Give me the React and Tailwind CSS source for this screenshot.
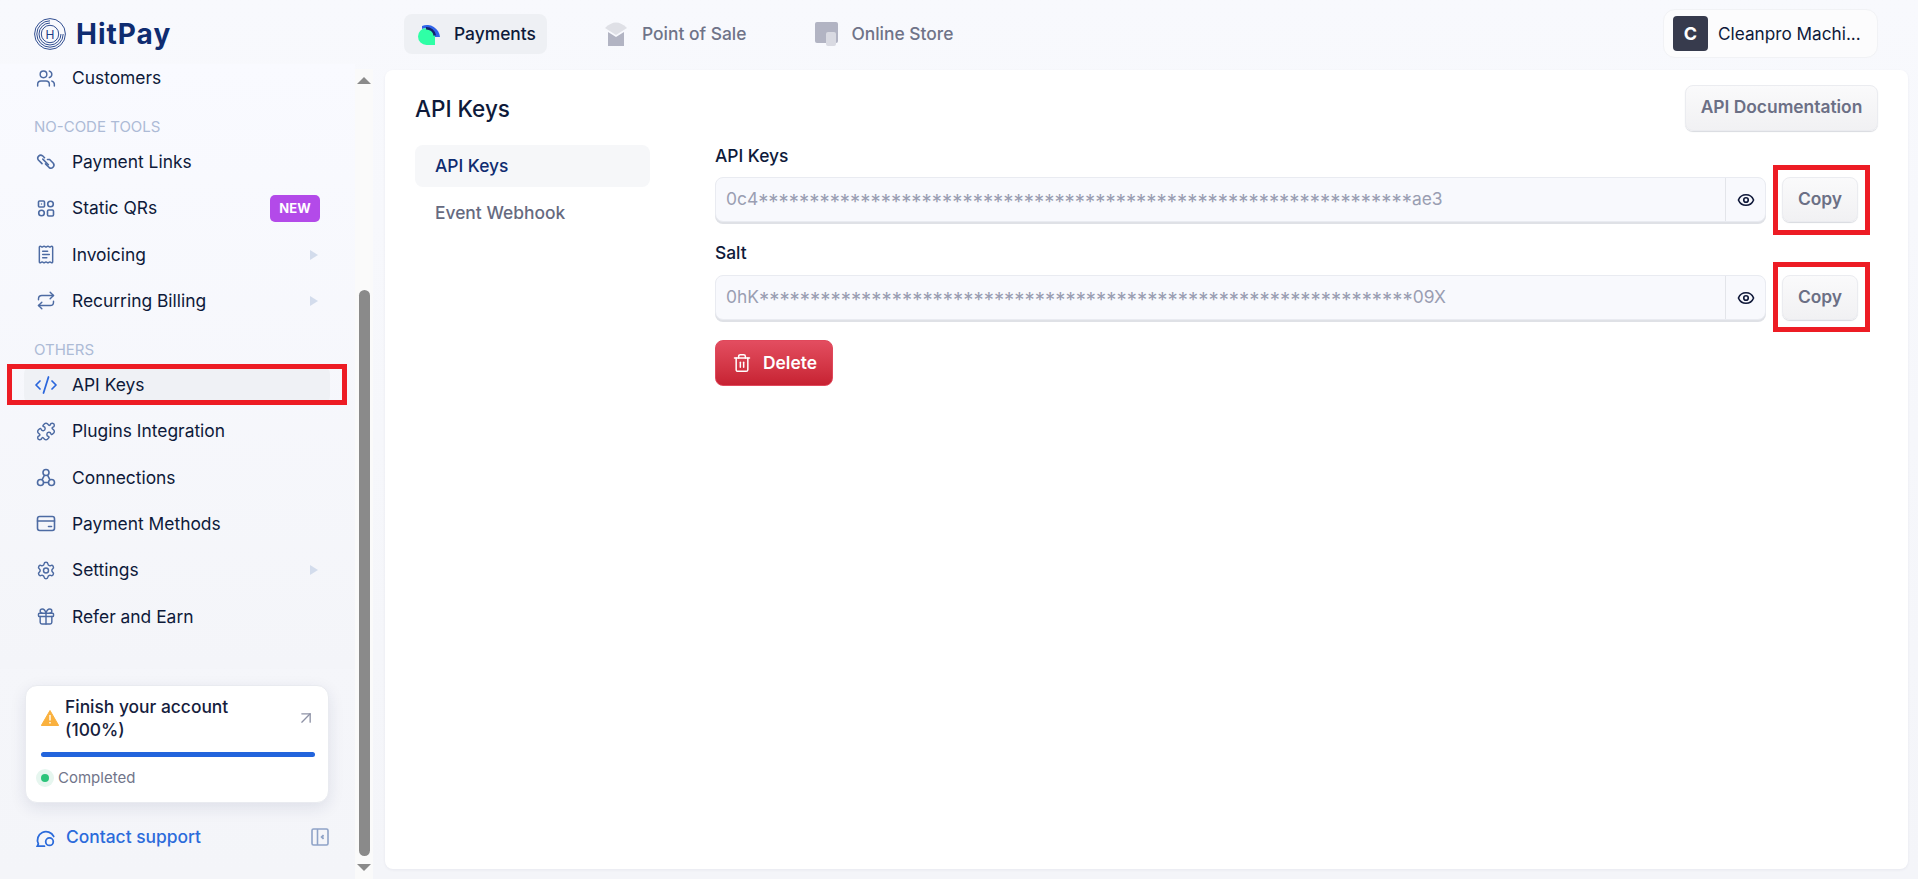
import React from "react";
import { Settings, Gift, Puzzle, CodeXml, ReceiptText, Repeat, Eye, Trash2, ArrowUpRight, Users } from "lucide-react";

const ic = "w-[21px] h-[21px] text-[#4d6ba3]";
const sw = 1.75;

function LinkIcon() {
  return (
    <svg viewBox="0 0 20 20" fill="none" stroke="currentColor" strokeWidth="1.6" strokeLinecap="round" className={ic}>
      <path d="M8.5 6.2 6.6 4.3a3 3 0 0 0-4.2 4.2l3.6 3.6" />
      <path d="M6.8 7.6l5.6 5.6" />
      <path d="M11.5 8l2.1 0 3.7 3.8a3 3 0 0 1-4.2 4.2l-3.6-3.6" />
    </svg>
  );
}
function QrIcon() {
  return (
    <svg viewBox="0 0 20 20" fill="none" stroke="currentColor" strokeWidth="1.6" className={ic}>
      <rect x="2.5" y="2.5" width="6" height="6" rx="1" />
      <rect x="4.9" y="4.9" width="1.2" height="1.2" fill="currentColor" stroke="none" />
      <circle cx="14.5" cy="5.5" r="2.8" />
      <circle cx="5.5" cy="14.5" r="2.8" />
      <rect x="11.5" y="11.5" width="6" height="6" rx="1.2" />
    </svg>
  );
}
function ConnIcon() {
  return (
    <svg viewBox="0 0 20 20" fill="none" stroke="currentColor" strokeWidth="1.6" className={ic}>
      <circle cx="10" cy="5" r="3" />
      <circle cx="4.5" cy="15" r="3" />
      <circle cx="15.5" cy="15" r="3" />
      <path d="M8.5 7.6 6 12.4M11.5 7.6 14 12.4M7.5 15h5" />
    </svg>
  );
}
function CardIcon() {
  return (
    <svg viewBox="0 0 20 20" fill="none" stroke="currentColor" strokeWidth="1.6" strokeLinecap="round" className={ic}>
      <rect x="1.5" y="3" width="17" height="14" rx="2.2" />
      <path d="M1.5 7.5h17M12.5 13h3" />
    </svg>
  );
}

function Tri() {
  return <span className="w-0 h-0 border-y-[5px] border-y-transparent border-l-[8px] border-l-[#d3dcec] mr-[2px]" />;
}

function Row({ icon, label, children, active }) {
  return (
    <div className={`h-[38px] mb-[8.33px] mx-[24px] w-[306px] rounded-lg flex items-center pl-[12px] pr-[10px] ${active ? "bg-[#eff1f5]" : ""}`}>
      <span className="w-[20px] h-[20px] flex items-center justify-center shrink-0">{icon}</span>
      <span className="ml-[16px] text-[17.4px] leading-6 text-[#0e1a3a] flex-1">{label}</span>
      {children}
    </div>
  );
}

function GroupHead({ children }) {
  return <div className="h-[37.67px] pt-[14px] pl-[34px] text-[15px] leading-4 text-[#adbbd6] uppercase">{children}</div>;
}

function Redbox({ className }) {
  return <div className={`absolute border-[5px] border-[#ed1c24] pointer-events-none ${className}`} />;
}

function KeyField({ label, head, tail, boxClass, labelClass }) {
  return (
    <div className="mb-[17px]">
      <div className={`text-[17.4px] leading-6 font-medium text-[#0e1a3a] h-[36px] ${labelClass}`}>{label}</div>
      <div className="flex items-stretch">
        <div className="w-[1051px] h-[45px] flex rounded-lg border border-[#e9ebf1] bg-[#f8f9fd] shadow-[0_2px_0_#dfe1e6]">
          <div className="flex-1 min-w-0 flex items-center pl-[10px] text-[17.4px] text-[#9a9eb2] whitespace-nowrap overflow-hidden">
            <span>{head}</span>
            <span className="text-[20.4px] translate-y-[3px]">{"*".repeat(64)}</span>
            <span>{tail}</span>
          </div>
          <div className="w-[40px] border-l border-[#e3e5ea] flex items-center justify-center">
            <Eye className="w-[18px] h-[18px] text-[#10193a]" strokeWidth={2.2} />
          </div>
        </div>
        <div className="relative ml-[16px]">
          <button className="w-[76px] h-[45px] rounded-lg border border-[#ebecf0] bg-gradient-to-b from-[#fafafb] to-[#f1f1f3] shadow-[0_1px_1px_#d8dadf] text-[17.4px] font-semibold text-[#6b6f85]">Copy</button>
          <Redbox className={`-left-[9px] w-[97px] h-[70px] ${boxClass}`} />
        </div>
      </div>
    </div>
  );
}

function Logo() {
  return (
    <svg viewBox="0 0 32 32" className="w-[32px] h-[32px] text-[#1b3b85]" fill="none" stroke="currentColor">
      <circle cx="16" cy="16" r="15.4" strokeWidth="0.9" />
      <path d="M16 2.8A13.2 13.2 0 1 0 29.2 16" strokeWidth="0.9" />
      <path d="M16 5A11 11 0 1 0 27 16" strokeWidth="0.9" />
      <circle cx="16" cy="16" r="8.7" strokeWidth="0.9" />
      <text x="16" y="20.5" textAnchor="middle" fontSize="12" fontFamily="Inter, sans-serif" fill="currentColor" stroke="none">H</text>
    </svg>
  );
}

function PayIcon() {
  return (
    <svg viewBox="0 0 22 21" className="w-[22px] h-[21px]">
      <path d="M8.5 4A8.5 8.5 0 0 0 8.5 21H17V12.5A8.5 8.5 0 0 0 8.5 4Z" fill="#2fffa6" />
      <path d="M4 2A13 13 0 0 1 22 13H17A8.5 8.5 0 0 0 8.5 4Q6 3.8 4 5Z" fill="#2f62e8" />
      <path d="M8 4.2A8.5 8.5 0 0 1 16.8 11.5" fill="none" stroke="#12246b" strokeWidth="2.5" />
    </svg>
  );
}
function PosIcon() {
  return (
    <svg viewBox="0 0 22 24" className="w-[22px] h-[24px]">
      <path d="M0 6Q11-5 22 6L11 13Z" fill="#dfe0e6" />
      <path d="M3 10l8 5 8-5v14H3Z" fill="#b2b4c3" />
    </svg>
  );
}
function StoreIcon() {
  return (
    <svg viewBox="0 0 23 24" className="w-[23px] h-[24px]">
      <rect width="23" height="21" rx="2" fill="#b2b4c3" />
      <rect x="11" y="10" width="10" height="14" rx="2" fill="#d9dae2" />
    </svg>
  );
}

function Tab({ icon, label, active, className }) {
  return (
    <div className={`h-[40px] rounded-lg flex items-center ${active ? "bg-[#eef0f4] text-[#0e1a3a]" : "text-[#6f7388]"} font-medium text-[17.4px] ${className}`}>
      {icon}
      <span>{label}</span>
    </div>
  );
}

export default function App() {
  return (
    <div className="w-[1918px] h-[879px] overflow-hidden flex bg-gradient-to-b from-[#f8f9fd] to-[#f4f5f9] font-[Inter,sans-serif]">
      <aside className="w-[355px] shrink-0 h-full flex flex-col">
        <div className="h-[64px] shrink-0 pl-[34px] pt-[18px] flex items-start">
          <Logo />
          <span className="ml-[10px] text-[28px] leading-[32px] font-bold tracking-[1px] text-[#0f2c70]">HitPay</span>
        </div>
        <div className="relative h-[605px] shrink-0 overflow-hidden bg-gradient-to-b from-[#f9faff] to-[#f4f5f9]">
          <div className="-mt-[5px]">
            <Row icon={<Users className={ic} strokeWidth={sw} />} label="Customers" />
            <GroupHead>No-code tools</GroupHead>
            <Row icon={<LinkIcon />} label="Payment Links" />
            <Row icon={<QrIcon />} label="Static QRs">
              <span className="w-[50px] h-[27px] rounded-[5px] bg-[#b34ae9] text-white text-[13px] font-bold flex items-center justify-center">NEW</span>
            </Row>
            <Row icon={<ReceiptText className={ic} strokeWidth={sw} />} label="Invoicing"><Tri /></Row>
            <Row icon={<Repeat className={ic} strokeWidth={sw} />} label="Recurring Billing"><Tri /></Row>
            <GroupHead>Others</GroupHead>
            <Row active icon={<CodeXml className="w-[24px] h-[24px] shrink-0 text-[#2a66dc]" strokeWidth={sw} />} label="API Keys" />
            <Row icon={<Puzzle className={ic} strokeWidth={sw} />} label="Plugins Integration" />
            <Row icon={<ConnIcon />} label="Connections" />
            <Row icon={<CardIcon />} label="Payment Methods" />
            <Row icon={<Settings className={ic} strokeWidth={sw} />} label="Settings"><Tri /></Row>
            <Row icon={<Gift className={ic} strokeWidth={sw} />} label="Refer and Earn" />
          </div>
          <Redbox className="left-[7px] top-[300px] w-[340px] h-[41px]" />
        </div>
        <div className="flex-1 px-[25px] pt-[16px]">
          <div className="w-[304px] h-[118px] rounded-xl bg-white shadow-[0_5px_16px_rgba(30,40,90,0.10)] border border-[#e9ebf0] pt-[9px] pl-[15px] pr-[12px]">
            <div className="flex items-center">
              <svg viewBox="0 0 18 16" className="w-[18px] h-[16px] shrink-0">
                <path d="M9 0.5 17.7 15.5H0.3Z" fill="#fab13e" stroke="#fab13e" strokeLinejoin="round" />
                <path d="M9 5v5.5M9 12v1.5" stroke="#fff" strokeWidth="1.4" />
              </svg>
              <span className="ml-[6px] w-[200px] text-[17.4px] leading-[23px] font-medium text-[#161d3d]">Finish your account (100%)</span>
              <ArrowUpRight className="w-[20px] h-[20px] ml-auto text-[#8e92a6]" strokeWidth={1.6} />
            </div>
            <div className="h-[5px] w-[274px] rounded-full bg-[#2264dc] mt-[11px]" />
            <div className="flex items-center mt-[11px] -ml-[5px]">
              <span className="w-[18px] h-[18px] rounded-full bg-[#e6f6ef] flex items-center justify-center">
                <span className="w-[8px] h-[8px] rounded-full bg-[#2cc47b]" />
              </span>
              <span className="ml-[4px] text-[15px] leading-5 text-[#71758a]">Completed</span>
            </div>
          </div>
          <div className="mt-[24px] flex items-center h-[20px] pl-[10px] pr-[1px]">
            <svg viewBox="0 0 20 20" fill="none" stroke="#2b6bdb" strokeWidth="1.7" className="w-[21px] h-[21px]">
              <path d="M9 18.3H2.2l1-2.2A8 8 0 1 1 17.8 9" strokeLinecap="round" />
              <circle cx="13.8" cy="14" r="3.6" />
            </svg>
            <span className="ml-[10px] text-[17.4px] font-medium text-[#2b6bdb]">Contact support</span>
            <svg viewBox="0 0 18 18" fill="none" stroke="#8fa3c7" strokeWidth="1.6" className="w-[18px] h-[18px] ml-auto">
              <rect x="1" y="1" width="16" height="16" rx="1.5" />
              <path d="M6.5 1v16" />
              <path d="M12.5 7 10.5 9l2 2" fill="#8fa3c7" />
            </svg>
          </div>
        </div>
      </aside>

      <div className="w-[18px] shrink-0 h-full pt-[69px]">
        <div className="h-[810px] bg-[#fafafa] flex flex-col items-center">
          <span className="mt-[8px] w-0 h-0 border-x-[7px] border-x-transparent border-b-[7px] border-b-[#8a8a8a]" />
          <div className="mt-[206px] w-[11px] h-[566px] rounded-full bg-[#8a8a8a]" />
          <span className="mt-[8px] w-0 h-0 border-x-[7px] border-x-transparent border-t-[7px] border-t-[#8a8a8a]" />
        </div>
      </div>

      <div className="flex-1 min-w-0 flex flex-col pl-[12px] pr-[10px]">
        <header className="h-[70px] shrink-0 flex items-start relative">
          <Tab active label="Payments" icon={<span className="mr-[14px] flex"><PayIcon /></span>} className="w-[143px] pl-[14px] mt-[14px] ml-[19px]" />
          <Tab label="Point of Sale" icon={<span className="mr-[15px]"><PosIcon /></span>} className="ml-[58px] mt-[14px]" />
          <Tab label="Online Store" icon={<span className="mr-[13px]"><StoreIcon /></span>} className="ml-[69px] mt-[14px]" />
          <div className="ml-auto mt-[9px] mr-[30px] w-[215px] h-[49px] rounded-xl bg-[#fcfcfd] border border-[#f1f2f5] flex items-center pl-[9px]">
            <span className="w-[35px] h-[35px] rounded bg-[#373b4d] text-white font-bold text-[18px] flex items-center justify-center">C</span>
            <span className="ml-[10px] text-[17.2px] text-[#0e1a3a]">Cleanpro Machi...</span>
          </div>
        </header>
        <main className="h-[799px] shrink-0 bg-white rounded-lg shadow-[0_1px_3px_rgba(30,40,90,0.06)] pl-[30px] pr-[30px] pt-[15px]">
          <div className="flex justify-between items-start h-[60px]">
            <h1 className="text-[22.5px] leading-[47px] font-medium text-[#0e1a3a]">API Keys</h1>
            <button className="w-[193px] h-[46px] pb-[1px] rounded-lg border border-[#ebecf0] bg-gradient-to-b from-[#fafafb] to-[#f1f1f3] shadow-[0_1px_1px_#d8dadf] text-[17.4px] font-semibold text-[#6b6f85]">API Documentation</button>
          </div>
          <div className="flex">
            <nav className="w-[235px] shrink-0">
              <div className="h-[42px] rounded-lg bg-[#f6f7f9] flex items-center pl-[20px] text-[17.4px] font-medium text-[#0f2c70]">API Keys</div>
              <div className="h-[42px] mt-[5px] flex items-center pl-[20px] text-[17.4px] font-medium text-[#666a80]">Event Webhook</div>
            </nav>
            <section className="ml-[65px] -mt-[4px]">
              <KeyField label="API Keys" head="0c4" tail="ae3" boxClass="-top-[12px]" labelClass="pt-[3px]" />
              <KeyField label="Salt" head="0hK" tail="09X" boxClass="-top-[13px]" labelClass="pt-[2px]" />
              <button className="mt-[20px] w-[118px] h-[46px] rounded-lg bg-gradient-to-b from-[#e34d60] to-[#c72132] border border-[#e0485b] flex items-center pl-[16px] text-white font-semibold text-[17.4px]">
                <Trash2 className="w-[20px] h-[20px] mr-[11px]" strokeWidth={1.8} />
                Delete
              </button>
            </section>
          </div>
        </main>
      </div>
    </div>
  );
}
